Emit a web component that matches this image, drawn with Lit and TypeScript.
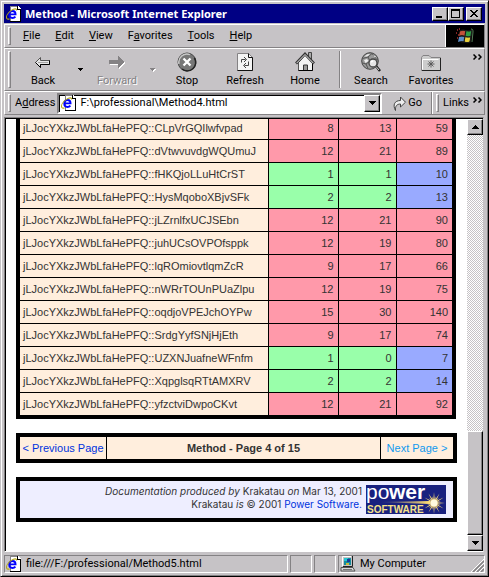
import { LitElement, html, svg, css } from "lit";
import { customElement } from "lit/decorators.js";

type Tone = "high" | "low" | "cool";
interface Method { name: string; values: number[] }

const PREFIX = "jLJocYXkzJWbLfaHePFQ::";
const METHODS: Method[] = [
  { name: "CLpVrGQIlwfvpad", values: [8, 13, 59] },
  { name: "dVtwvuvdgWQUmuJ", values: [12, 21, 89] },
  { name: "fHKQjoLLuHtCrST", values: [1, 1, 10] },
  { name: "HysMqoboXBjvSFk", values: [2, 2, 13] },
  { name: "jLZrnlfxUCJSEbn", values: [12, 21, 90] },
  { name: "juhUCsOVPOfsppk", values: [12, 19, 80] },
  { name: "lqROmiovtlqmZcR", values: [9, 17, 66] },
  { name: "nWRrTOUnPUaZlpu", values: [12, 19, 75] },
  { name: "oqdjoVPEJchOYPw", values: [15, 30, 140] },
  { name: "SrdgYyfSNjHjEth", values: [9, 17, 74] },
  { name: "UZXNJuafneWFnfm", values: [1, 0, 7] },
  { name: "XqpglsqRTtAMXRV", values: [2, 2, 14] },
  { name: "yfzctviDwpoCKvt", values: [12, 21, 92] },
];

const toneOf = (m: Method, column: number): Tone =>
  m.values[0] > 2 ? "high" : column === 2 ? "cool" : "low";

const pageIcon = html`<svg width="16" height="16" viewBox="0 0 16 16" aria-hidden="true">
  <g shape-rendering="crispEdges">
    <path d="M4 0h8l3 3v13H4z" fill="#fff"/>
    <path d="M4 0h8v1H5v14H4z" fill="#848284"/>
    <path d="M11 0h1v3h3v1h-4zM14 3h1v13H4v-1h10z" fill="#000"/>
    <path d="M12 1h1v1h1v1h-2z" fill="#fff"/>
  </g>
  <path d="M9.400 10.600C8.500 11.700 7.700 12 6.500 12C4.500 12 3.200 10.600 3.200 8.600S4.500 5 6.500 5S9.600 6.200 9.600 8.400H4" fill="none" stroke="#0000ff" stroke-width="1.800"/>
  <path d="M10.500 4.500C11 2.400 8.500 2.300 5.400 4.400C2 6.800-.2 10.300.8 12.400C1.200 13.500 2.500 13.400 3.500 12.800" fill="none" stroke="#b5a818" stroke-width="1.100"/>
</svg>`;

const icons = {
  back: html`<svg width="20" height="20" viewBox="0 0 20 20" aria-hidden="true">
    <path d="M2.500 10.500l5-5v3h9v4h-9v3z" fill="#e7e7e7" stroke="#555"/>
    <path d="M7.500 12.500h9v-4M7.500 15.500v-3M2.500 10.500l5 5" fill="none" stroke="#000"/>
    <path d="M5 10.500h10" stroke="#a5a5a5"/></svg>`,
  forward: html`<svg width="20" height="20" viewBox="0 0 20 20" aria-hidden="true" shape-rendering="crispEdges">
    <path d="M3 9h9V5l6 6-6 6v-4H3z" fill="#fff"/><path d="M2 8h9V4l6 6-6 6v-4H2z" fill="#848284"/></svg>`,
  stop: html`<svg width="20" height="20" viewBox="0 0 20 20" aria-hidden="true">
    <circle cx="10" cy="10" r="9" fill="#777" stroke="#444"/>
    <path d="M2 12A8.200 8.200 0 0 1 13 2.600" fill="none" stroke="#c8c8c8" stroke-width="1.500"/>
    <path d="M17.400 6A8.400 8.400 0 0 1 5 17" fill="none" stroke="#222" stroke-width="1.500"/>
    <path d="M6.500 6.500l7 7m0-7l-7 7" stroke="#fff" stroke-width="2.300"/></svg>`,
  refresh: html`<svg width="20" height="20" viewBox="0 0 20 20" aria-hidden="true">
    <path d="M2.500 1.500h11l4 4v13h-15z" fill="#f4f4f4" stroke="#848284"/>
    <path d="M13.500 1.500v4h4v13h-15" fill="none" stroke="#111"/>
    <path d="M6.500 10.500V7.500h4M9 5l2.500 2.500L9 10M13.500 9.500v4h-4M11 11l-2.500 2.500L11 16" fill="none" stroke="#444"/></svg>`,
  home: html`<svg width="20" height="20" viewBox="0 0 20 20" aria-hidden="true">
    <path d="M13.500 7V.5h3V11" fill="#aaa" stroke="#444"/>
    <path d="M3.500 10.500v8h14v-8L10 3z" fill="#f3f3f3" stroke="#555"/>
    <path d="M17.500 11v7.500h-14" fill="none" stroke="#000"/>
    <path d="M1 11.500L10 2l9 9.500" fill="none" stroke="#333" stroke-width="2.600"/>
    <path d="M1.500 11.200L10 2.500l8.500 8.700" fill="none" stroke="#e5e5e5"/>
    <path d="M8.500 18v-5h4v5" fill="#999" stroke="#333"/></svg>`,
  search: html`<svg width="20" height="20" viewBox="0 0 20 20" aria-hidden="true">
    <circle cx="9" cy="9" r="8.300" fill="#999" stroke="#444"/>
    <path d="M1.500 6.500L7 5l4-3.500M7 5l2 4-4 3-3.500-1M9 9l6-2 2 1M5 12l2 4.500M11 1.500l4 5" fill="none" stroke="#555"/>
    <path d="M3 4.500L7 2l2 .5-3 2zM3 8l3-1 1.500 2-3 2zM12 3l3 1.500-1 1z" fill="#eee"/>
    <circle cx="12" cy="11" r="4" fill="#e5e5e5" stroke="#444" stroke-width="1.300"/>
    <path d="M10 10l2-1" stroke="#fff" stroke-width="1.500"/>
    <path d="M15 14l4 5" stroke="#222" stroke-width="2.600"/><path d="M15 14.500l3 3.500" stroke="#ccc"/></svg>`,
  favorites: html`<svg width="20" height="20" viewBox="0 0 20 20" aria-hidden="true">
    <path d="M.5 18V5.500l1.500-2h6l2 2h9.500V18.500H.5z" fill="#ccc" stroke="#848284"/>
    <path d="M1.500 17.500V7.500h16" fill="none" stroke="#fff"/>
    <path d="M19.500 6v12.500H1" fill="none" stroke="#222"/>
    <path d="M10 8.500v7M6.500 12h7M7.500 9.500l5 5m0-5l-5 5" stroke="#555" stroke-width=".9"/></svg>`,
};

const chevrons = html`<svg width="9" height="6" viewBox="0 0 9 6" aria-hidden="true">
  <path d="M.5.5L3 3 .5 5.500M5.500.5L8 3 5.500 5.500" fill="none" stroke="#000" stroke-width="1.500"/></svg>`;

const triangle = (dir: "up" | "down") => html`<svg width="7" height="4" viewBox="0 0 7 4"
  shape-rendering="crispEdges" aria-hidden="true">${dir === "up"
    ? svg`<path d="M3 0h1v1h1v1h1v1h1v1H0V3h1V2h1V1h1z"/>`
    : svg`<path d="M0 0h7v1H6v1H5v1H4v1H3V3H2V2H1V1H0z"/>`}</svg>`;

const smallTriangle = html`<svg width="6" height="4" viewBox="0 0 6 4" shape-rendering="crispEdges" aria-hidden="true">
  <path class="shade" d="M1 1h5v1H5v1H4v1H3V3H2V2H1z"/><path d="M0 0h5v1H4v1H3v1H2V2H1V1H0z"/></svg>`;

const flag = html`<svg width="18" height="16" viewBox="0 0 18 16" role="img" aria-label="Windows">
  <path d="M1 2h1M3 1h1M0 5h1M2 7h1M1 10h1M3 12h1" stroke="#a33" stroke-width="1.500"/>
  <path d="M4 3C6 2 8 2 10 3L9 8C7 7 5 7 3 8z" fill="#c4523c"/>
  <path d="M3 9c2-1 4-1 6 0l-1 5c-2-1-4-1-6 0z" fill="#5c8dc8"/>
  <path d="M10 2.500c2 1 4 1 6 0L15 8c-2 1-4 1-6 0z" fill="#2f9d45"/>
  <path d="M9 8.500c2 1 4 1 6 0l-1 5c-2 1-4 1-6 0z" fill="#e8cf3c"/>
  <path d="M4 3c4-3 7 2 12-1l-2 12c-4 2-6-1-9 0M3 8.500c4-2 8 2 12 0M10 2L8 14" fill="none" stroke="#1c1c1c" stroke-width="1.200"/>
  <path d="M15 1c2 0 2 1 2 3l-1 10" fill="none" stroke="#577d58"/></svg>`;

const computer = html`<svg width="16" height="16" viewBox="0 0 16 16" aria-hidden="true">
  <path d="M2 0h10l1 1v10H3L2 10z" fill="#c6c3c6"/><path d="M2.500 10V.5H11" fill="none" stroke="#fff"/>
  <path d="M12.500 0v10.500H3" fill="none" stroke="#222"/>
  <path d="M4 2h7v7H4z" fill="#168c9c"/><path d="M4 2h4v3H4z" fill="#25c6cf"/><path d="M7 3h3v3H7z" fill="#173a9a"/><path d="M6 7h3v2H6z" fill="#c9b93a"/>
  <path d="M1 11.500h12l2 3.500H1z" fill="#d8d8d8" stroke="#555"/><path d="M3 13.500h9" stroke="#777"/></svg>`;

const goArrow = html`<svg width="14" height="15" viewBox="0 0 14 15" aria-hidden="true">
  <path d="M2.500 14.500C-.5 9 1.500 4.500 7.500 4.500V1l5 5.200-5 4.800V8C4 8 2 10 2.500 14.500z" fill="#eee" stroke="#444"/></svg>`;

const rays = [0, 30, 60, 90, 120, 150];
const powerLogo = html`<svg class="logo" width="80" height="29" viewBox="0 0 80 29" role="img" aria-label="Power Software">
  <defs><linearGradient id="streak"><stop offset="0" stop-color="#18207f"/><stop offset="1" stop-color="#ffdc70"/></linearGradient></defs>
  <path d="M0 0h80v29H0z" fill="#18207f"/>
  <path d="M12 17l52-1v3z" fill="url(#streak)"/>
  <text class="logo-light" x="0" y="14">po</text><text class="logo-heavy" x="23" y="14">wer</text>
  <text class="logo-small" x="1" y="28">SOFTWARE</text>
  ${rays.map((a) => svg`<path transform="rotate(${a} 68 18)" d="M57 18l11-1 11 1-11 1z" fill="#f6d87a"/>`)}
  ${rays.map((a) => svg`<path transform="rotate(${a + 15} 68 18)" d="M61 18l7-1 7 1-7 1z" fill="#f6d87a"/>`)}
  <circle cx="68" cy="18" r="3.500" fill="#fffbe0"/></svg>`;

@customElement("app-root")
export class AppRoot extends LitElement {
  static styles = css`
    :host { display: block; height: 100vh; --face: #c6c3c6; --dark: #848284;
      font: 11px/14px Roboto, "Noto Sans", sans-serif; color: #000; }
    *, *::before { box-sizing: border-box; }
    svg { display: block; flex: none; }
    button { font: inherit; color: inherit; background: none; border: 0; padding: 0; margin: 0; }
    .window { height: 100%; display: flex; flex-direction: column; background: var(--face); padding: 3px;
      border: 1px solid; border-color: var(--face) #000 #000 var(--face); box-shadow: inset 1px 1px #fff, inset -1px -1px var(--dark); }

    .title { flex: none; display: flex; align-items: center; height: 19px; padding: 0 3px 0 2px; background: #000084; color: #fff; }
    .title h1 { flex: 1; margin: 0 0 0 3px; font: bold 11px/18px "Noto Sans", sans-serif; white-space: nowrap; }
    .raised { display: flex; align-items: center; justify-content: center; flex: none; background: var(--face);
      border: 1px solid; border-color: #fff #000 #000 #fff; box-shadow: inset -1px -1px var(--dark); }
    .title .raised { width: 16px; height: 14px; }
    .title .close { margin-left: 2px; }

    .bar { flex: none; display: flex; align-items: center; border: 1px solid; border-color: #fff var(--dark) var(--dark) #fff; padding-left: 3px; }
    .grip { flex: none; align-self: stretch; width: 3px; margin: 2px 0; border: 1px solid; border-color: #fff var(--dark) var(--dark) #fff; }
    .menu { height: 24px; margin-top: 1px; }
    .menu nav { flex: 1; display: flex; gap: 15px; padding-left: 12px; }
    .brand { display: flex; align-items: center; justify-content: center; width: 39px; align-self: stretch; background: #000; border-left: 1px solid #fff; }
    .tools { height: 43px; }
    .tools .grip { margin-right: 2px; }
    .tool { flex: none; width: 60px; height: 36px; display: flex; flex-direction: column; align-items: center; justify-content: space-between; }
    .tool.narrow { width: 52px; }
    .tool.mid { width: 56px; }
    .tool.wide { width: 64px; }
    .drop { flex: none; width: 16px; display: flex; justify-content: center; }
    .shade { fill: none; }
    .off .shade { fill: #fff; }
    .off { color: var(--dark); fill: var(--dark); text-shadow: 1px 1px #fff; }
    .rule { align-self: stretch; width: 2px; margin: 2px 0 2px 6px; border-left: 1px solid var(--dark); border-right: 1px solid #fff; }
    .more { margin-left: auto; padding: 5px 2px 0 0; align-self: flex-start; }
    .address { height: 24px; }
    .address label { padding: 0 2px 0 4px; }
    .combo { flex: 1; min-width: 0; height: 21px; display: flex; align-items: center; padding: 0 0 0 2px; background: #fff;
      border: 2px solid; border-color: var(--dark) #fff #fff var(--dark); box-shadow: inset 1px 1px #000; }
    .combo input { flex: 1; min-width: 0; border: 0; outline: 0; padding: 0 0 0 3px; background: none; font: inherit; color: #000; }
    .combo .raised { width: 16px; height: 17px; }
    .go { display: flex; align-items: center; gap: 1px; padding: 0 9px 0 11px; }
    .links { display: flex; align-items: center; align-self: stretch; gap: 4px; padding-left: 4px; border-left: 1px solid var(--dark); box-shadow: inset 1px 0 #fff; }
    u { text-underline-offset: 1px; }

    .view { flex: 1; min-height: 0; display: flex; margin: 2px 1px 0 0; padding: 1px 0 0 1px; background: #fff;
      border: 1px solid; border-color: var(--dark) var(--face) #fff var(--dark); box-shadow: inset 1px 1px #000; }
    .page { flex: 1; min-width: 0; overflow: hidden; display: flex; flex-direction: column; justify-content: flex-end; gap: 14px;
      padding: 0 10px 29px; font: 11px/14px "Liberation Sans", Arial, sans-serif; color: #333; }
    .data { border-collapse: collapse; table-layout: fixed; margin-right: 1px; border: 4px solid #000; flex: none; }
    .data td, .data th { border: 1px solid #000; padding: 4px 4px 4px 3px; text-align: right; font-weight: normal; white-space: nowrap; }
    .data th { text-align: left; background: #ffeedd; }
    .data tr { height: 23px; }
    .c1 { width: 70px; } .c2, .c3 { width: 58px; }
    .high { background: #ff99aa; } .low { background: #99ffaa; } .cool { background: #99aaff; }
    .box { flex: none; display: flex; border: 4px solid #000; }
    .pager { background: #ffeedd; height: 30px; text-align: center; line-height: 22px; }
    .pager a, .pager strong { white-space: nowrap; }
    .pager a { width: 87px; border-right: 1px solid #000; color: #0033dd; text-decoration: none; }
    .pager strong { flex: 1; }
    .pager .next { width: 73px; border: 0; border-left: 1px solid #000; color: #1199ee; }
    .credits { background: #eeeeff; height: 45px; justify-content: flex-end; gap: 4px; padding: 4px 7px 4px 0; text-align: right; }
    .credits p { margin: 0; font: 10px/13px Inter, "Liberation Sans", sans-serif; white-space: nowrap; }
    .credits a { color: #0033dd; text-decoration: none; }
    .logo { overflow: visible; }
    .logo-light { font: 21px "Liberation Sans", sans-serif; fill: #fff; }
    .logo-heavy { font: bold 21px "Liberation Sans", sans-serif; fill: #fff; }
    .logo-small { font: bold 10px "Liberation Sans", sans-serif; fill: #f5e08a; }

    .scroll { flex: none; width: 16px; display: flex; flex-direction: column;
      background: repeating-conic-gradient(#fff 0 25%, #c6c3c6 0 50%) 0 0 / 2px 2px; }
    .scroll .raised { width: 16px; height: 16px; }
    .track { flex: 1; display: flex; flex-direction: column; justify-content: flex-end; }
    .scroll .thumb { height: 26%; }

    .status { flex: none; display: flex; gap: 2px; height: 18px; margin-top: 3px; }
    .pane { display: flex; align-items: center; gap: 4px; width: 22px; padding: 0 1px; white-space: nowrap;
      border: 1px solid; border-color: var(--dark) #fff #fff var(--dark); }
    .pane.main { flex: 1; }
    .pane.zone { width: 147px; padding-right: 0; }
    .zone .size { margin-left: auto; align-self: flex-end; }
  `;

  private tool(name: keyof typeof icons, label: string, size = "", disabled = false) {
    return html`<button class="tool ${size} ${disabled ? "off" : ""}" ?disabled=${disabled}>${icons[name]}<span>${label}</span></button>`;
  }

  render() {
    return html`<div class="window">
      <header class="title">${pageIcon}<h1>Method - Microsoft Internet Explorer</h1>
        <button class="raised" aria-label="Minimize"><svg width="10" height="8" shape-rendering="crispEdges"><path d="M1 6h6v2H1z"/></svg></button>
        <button class="raised" aria-label="Maximize"><svg width="10" height="9" shape-rendering="crispEdges"><path d="M0 0h9v9H0zM1 2v6h7V2z" fill-rule="evenodd"/></svg></button>
        <button class="raised close" aria-label="Close"><svg width="9" height="7" shape-rendering="crispEdges"><path d="M0 0h2v1h1v1h2V1h1V0h2v1H7v1H6v1H5v1h1v1h1v1h1v1H6V6H5V5H3v1H2v1H0V6h1V5h1V4h1V3H2V2H1V1H0z"/></svg></button>
      </header>
      <div class="bar menu"><span class="grip"></span><nav aria-label="Menu">
        <button><u>F</u>ile</button><button><u>E</u>dit</button><button><u>V</u>iew</button><button>F<u>a</u>vorites</button><button><u>T</u>ools</button><button><u>H</u>elp</button>
      </nav><span class="brand">${flag}</span></div>
      <div class="bar tools"><span class="grip"></span>
        ${this.tool("back", "Back")}<button class="drop" aria-label="Back history">${smallTriangle}</button>
        ${this.tool("forward", "Forward", "mid", true)}<button class="drop off" disabled aria-label="Forward history">${smallTriangle}</button>
        ${this.tool("stop", "Stop", "narrow")}${this.tool("refresh", "Refresh", "wide")}${this.tool("home", "Home", "mid")}
        <span class="rule"></span>${this.tool("search", "Search")}${this.tool("favorites", "Favorites")}
        <button class="more" aria-label="More tools">${chevrons}</button></div>
      <div class="bar address"><span class="grip"></span><label for="url">A<u>d</u>dress</label>
        <div class="combo">${pageIcon}<input id="url" type="text" .value=${"F:\\professional\\Method4.html"}><button class="raised" aria-label="Show addresses">${triangle("down")}</button></div>
        <button class="go">${goArrow}Go</button>
        <div class="links"><span class="grip"></span><span>Links</span><button class="more" aria-label="More links">${chevrons}</button></div></div>
      <div class="view"><main class="page">
        <table class="data"><colgroup><col><col class="c1"><col class="c2"><col class="c3"></colgroup><tbody>
          ${METHODS.map((m) => html`<tr><th scope="row">${PREFIX}${m.name}</th>${m.values.map((v, i) => html`<td class=${toneOf(m, i)}>${v}</td>`)}</tr>`)}
        </tbody></table>
        <nav class="box pager" aria-label="Pages"><a href="#previous">&lt; Previous Page</a><strong>Method - Page 4 of 15</strong><a class="next" href="#next">Next Page &gt;</a></nav>
        <footer class="box credits"><div><p><em>Documentation produced by</em> Krakatau <em>on</em> Mar 13, 2001</p>
          <p>Krakatau <em>is</em> © 2001 <a href="#power">Power Software.</a></p></div>${powerLogo}</footer>
      </main>
      <div class="scroll"><button class="raised" aria-label="Scroll up">${triangle("up")}</button>
        <div class="track"><div class="raised thumb"></div></div>
        <button class="raised" aria-label="Scroll down">${triangle("down")}</button></div></div>
      <footer class="status"><div class="pane main">${pageIcon}<span>file:///F:/professional/Method5.html</span></div>
        <div class="pane"></div><div class="pane"></div>
        <div class="pane zone">${computer}<span>My Computer</span>
          <svg class="size" width="13" height="13" aria-hidden="true"><path d="M0 13L13 0M4 13l9-9M8 13l5-5" stroke="#fff"/><path d="M2 13L13 2M6 13l7-7M10 13l3-3" stroke="#848284" stroke-width="1.500"/></svg></div>
      </footer></div>`;
  }
}
